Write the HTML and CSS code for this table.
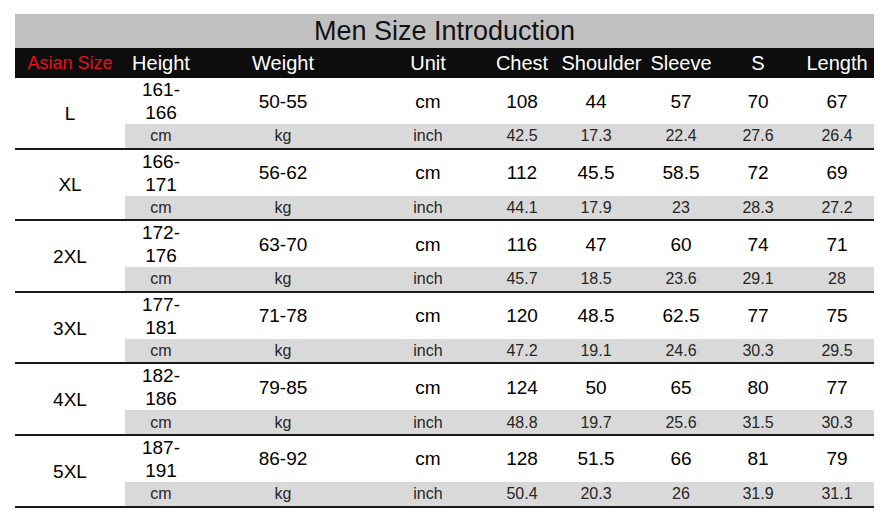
FILE: index.html
```html
<!DOCTYPE html>
<html>
<head>
<meta charset="utf-8">
<link rel="stylesheet" href="styles.css">
</head>
<body>
<div class="sheet">
  <div class="title">Men Size Introduction</div>
  <div class="head">
    <div class="hc red">Asian Size</div>
    <div class="hc">Height</div>
    <div class="hc">Weight</div>
    <div class="hc">Unit</div>
    <div class="hc">Chest</div>
    <div class="hc sh">Shoulder</div>
    <div class="hc">Sleeve</div>
    <div class="hc">S</div>
    <div class="hc len">Length</div>
  </div>

  <div class="row">
    <div class="size">L</div>
    <div class="v ht">161-166</div><div class="v">50-55</div><div class="v">cm</div><div class="v">108</div><div class="v">44</div><div class="v">57</div><div class="v">70</div><div class="v len">67</div>
    <div class="u">cm</div><div class="u">kg</div><div class="u">inch</div><div class="u">42.5</div><div class="u">17.3</div><div class="u">22.4</div><div class="u">27.6</div><div class="u len">26.4</div>
  </div>

  <div class="row">
    <div class="size">XL</div>
    <div class="v ht">166-171</div><div class="v">56-62</div><div class="v">cm</div><div class="v">112</div><div class="v">45.5</div><div class="v">58.5</div><div class="v">72</div><div class="v len">69</div>
    <div class="u">cm</div><div class="u">kg</div><div class="u">inch</div><div class="u">44.1</div><div class="u">17.9</div><div class="u">23</div><div class="u">28.3</div><div class="u len">27.2</div>
  </div>

  <div class="row">
    <div class="size">2XL</div>
    <div class="v ht">172-176</div><div class="v">63-70</div><div class="v">cm</div><div class="v">116</div><div class="v">47</div><div class="v">60</div><div class="v">74</div><div class="v len">71</div>
    <div class="u">cm</div><div class="u">kg</div><div class="u">inch</div><div class="u">45.7</div><div class="u">18.5</div><div class="u">23.6</div><div class="u">29.1</div><div class="u len">28</div>
  </div>

  <div class="row">
    <div class="size">3XL</div>
    <div class="v ht">177-181</div><div class="v">71-78</div><div class="v">cm</div><div class="v">120</div><div class="v">48.5</div><div class="v">62.5</div><div class="v">77</div><div class="v len">75</div>
    <div class="u">cm</div><div class="u">kg</div><div class="u">inch</div><div class="u">47.2</div><div class="u">19.1</div><div class="u">24.6</div><div class="u">30.3</div><div class="u len">29.5</div>
  </div>

  <div class="row">
    <div class="size">4XL</div>
    <div class="v ht">182-186</div><div class="v">79-85</div><div class="v">cm</div><div class="v">124</div><div class="v">50</div><div class="v">65</div><div class="v">80</div><div class="v len">77</div>
    <div class="u">cm</div><div class="u">kg</div><div class="u">inch</div><div class="u">48.8</div><div class="u">19.7</div><div class="u">25.6</div><div class="u">31.5</div><div class="u len">30.3</div>
  </div>

  <div class="row">
    <div class="size">5XL</div>
    <div class="v ht">187-191</div><div class="v">86-92</div><div class="v">cm</div><div class="v">128</div><div class="v">51.5</div><div class="v">66</div><div class="v">81</div><div class="v len">79</div>
    <div class="u">cm</div><div class="u">kg</div><div class="u">inch</div><div class="u">50.4</div><div class="u">20.3</div><div class="u">26</div><div class="u">31.9</div><div class="u len">31.1</div>
  </div>
</div>
</body>
</html>
```

FILE: styles.css
```css
html, body {
  margin: 0;
  padding: 0;
  background: #ffffff;
}

body {
  font-family: "Liberation Sans", Arial, sans-serif;
  color: #000;
}

.sheet {
  width: 859px;
  margin: 14px 0 0 15px;
}

.title {
  height: 34px;
  line-height: 35px;
  background: #c0c0c0;
  text-align: center;
  font-size: 27px;
  color: #111;
}

.head,
.row {
  display: grid;
  grid-template-columns: 110px 72px 172px 118px 70px 78px 92px 62px 85px;
}

.head {
  height: 30px;
  background: #0d0d0d;
  color: #fff;
}

.hc {
  display: flex;
  align-items: center;
  justify-content: center;
  font-size: 20px;
  padding-top: 1px;
  white-space: nowrap;
  min-width: 0;
}

.hc.red {
  color: #e5121c;
  font-size: 18px;
}

.hc.sh {
  padding-left: 11px;
}

.len {
  padding-left: 11px;
}

.row {
  grid-template-rows: 46px 23.6px;
  border-bottom: 2px solid #1a1a1a;
}

.size {
  grid-row: 1 / span 2;
  display: flex;
  align-items: center;
  justify-content: center;
  font-size: 19px;
  padding-top: 2px;
}

.v {
  display: flex;
  align-items: center;
  justify-content: center;
  text-align: center;
  font-size: 19px;
  line-height: 23px;
}

.v.ht {
  padding: 0 6px;
}

.u {
  display: flex;
  align-items: center;
  justify-content: center;
  background: #d9d9d9;
  font-size: 16px;
  color: #262626;
  padding-top: 1px;
}
```
